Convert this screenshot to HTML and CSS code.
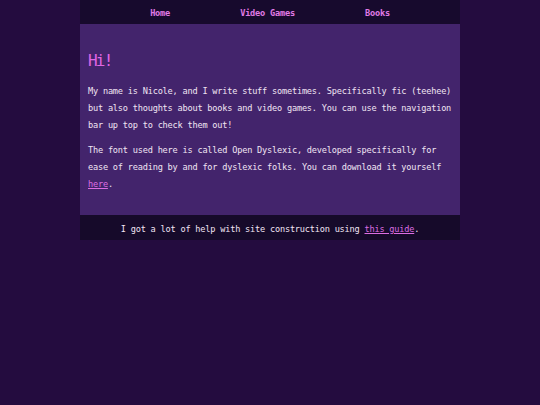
FILE: index.html
```html
<!DOCTYPE html>
<html>
<head>
<meta charset="utf-8">
<link rel="stylesheet" href="styles.css">
</head>
<body>
<div class="page">
  <nav class="nav">
    <a href="#">Home</a>
    <a href="#">Video Games</a>
    <a href="#">Books</a>
  </nav>
  <main class="content">
    <h1 class="title">Hi!</h1>
    <p>My name is Nicole, and I write stuff sometimes. Specifically fic (teehee) but also thoughts about books and video games. You can use the navigation bar up top to check them out!</p>
    <p>The font used here is called Open Dyslexic, developed specifically for ease of reading by and for dyslexic folks. You can download it yourself <a class="link" href="#">here</a>.</p>
  </main>
  <footer class="footer">I got a lot of help with site construction using <a class="link" href="#">this guide</a>.</footer>
</div>
</body>
</html>
```
FILE: styles.css
```css
html, body {
  margin: 0;
  padding: 0;
  background: #240c3f;
}
body {
  font-family: "DejaVu Sans Mono", "Liberation Mono", monospace;
  font-size: 8.6px;
  letter-spacing: -0.2px;
  color: #f1e4f3;
}
.page {
  width: 380px;
  margin: 0 auto;
}
.nav {
  height: 22px;
  padding-top: 2px;
  background: #170a2d;
  display: flex;
  justify-content: space-evenly;
  align-items: center;
}
.nav a {
  color: #e07ae6;
  text-decoration: none;
  font-weight: bold;
}
.content {
  background: #43246c;
  padding: 29px 8px 14px;
}
.title {
  margin: 0 0 14px;
  font-size: 16px;
  line-height: 16px;
  letter-spacing: -1.8px;
  color: #e066e4;
  font-weight: normal;
}
.content p {
  margin: 0 0 8px;
  line-height: 17px;
}
.link {
  color: #dc6de2;
}
.footer {
  background: #160a2a;
  height: 23px;
  padding-top: 2px;
  line-height: 25px;
  text-align: center;
}
```
